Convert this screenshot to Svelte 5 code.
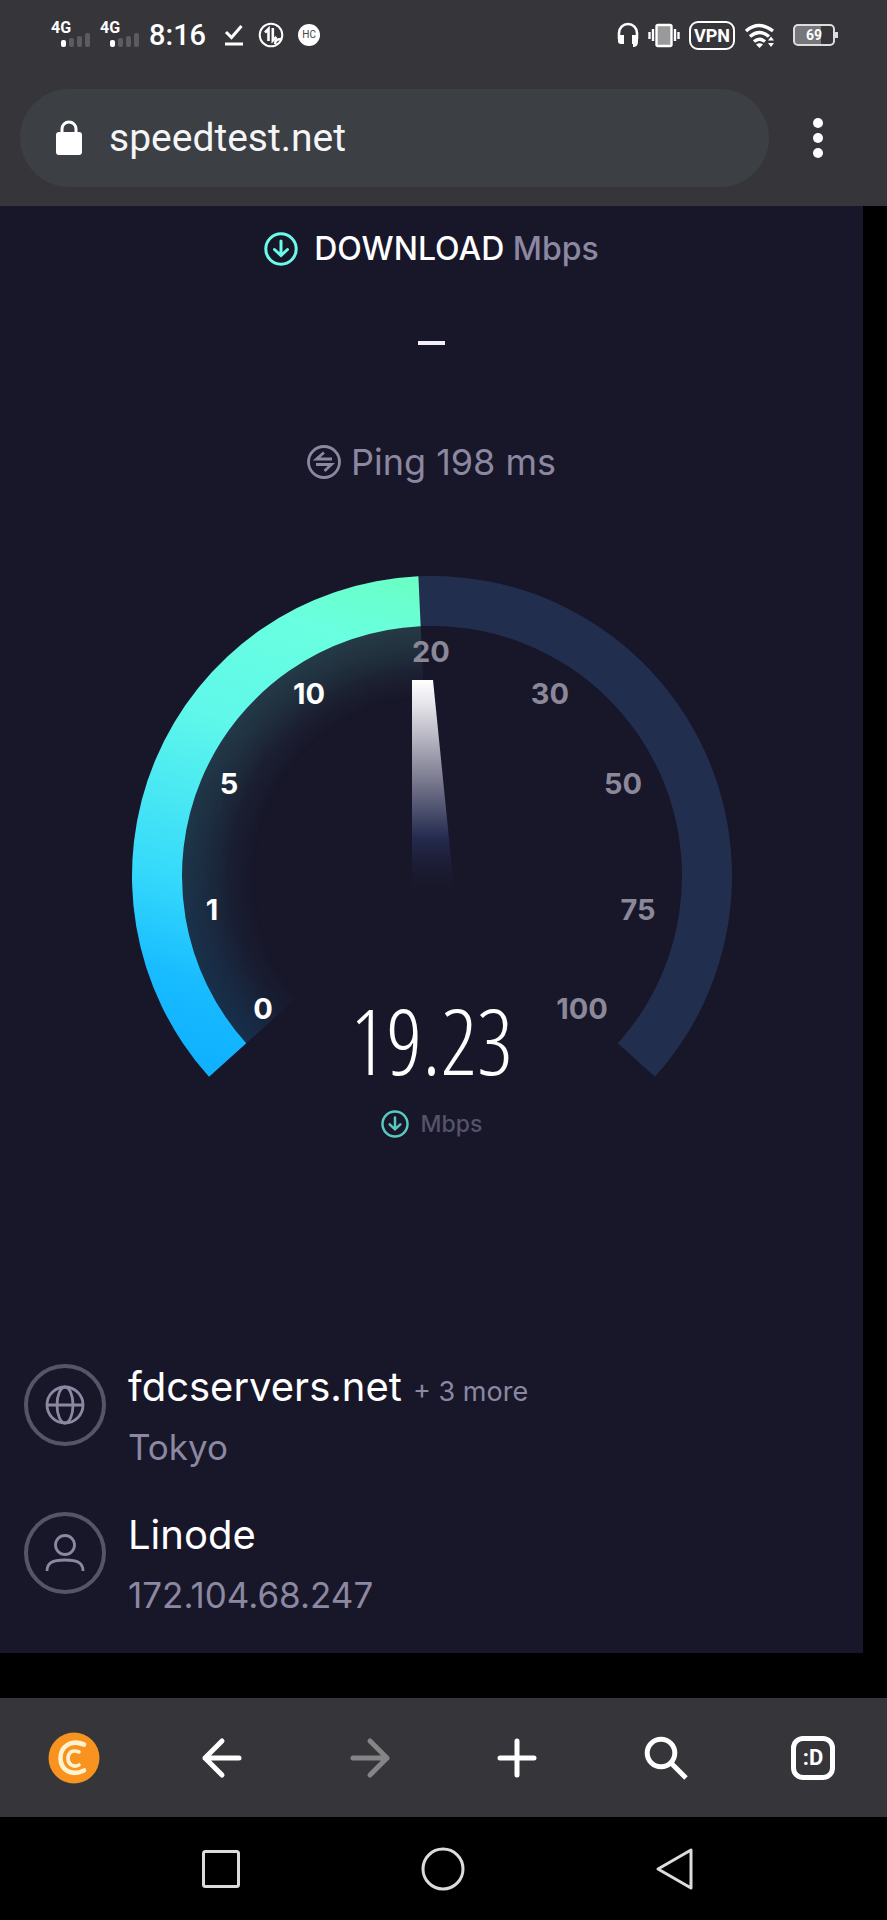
<script lang="ts">
	let url = $state('speedtest.net');

	const ping = 198;
	const speed = '19.23';

	// gauge scale, coordinates inside the 600 x 562 dial
	const ticks = [
		{ label: '0', x: 131, y: 433, passed: true },
		{ label: '1', x: 80, y: 334, passed: true },
		{ label: '5', x: 97, y: 208, passed: true },
		{ label: '10', x: 177, y: 118, passed: true },
		{ label: '20', x: 299, y: 76, passed: false },
		{ label: '30', x: 418, y: 118, passed: false },
		{ label: '50', x: 491, y: 208, passed: false },
		{ label: '75', x: 506, y: 334, passed: false },
		{ label: '100', x: 450, y: 433, passed: false }
	];

	const CENTER = 300;
	const START = -132;
	const END = 132;
	const PROGRESS = -2.6;

	// degrees are measured clockwise from twelve o'clock
	function point(r: number, deg: number) {
		const a = (deg * Math.PI) / 180;
		return `${(CENTER + r * Math.sin(a)).toFixed(2)} ${(CENTER - r * Math.cos(a)).toFixed(2)}`;
	}

	function band(inner: number, outer: number, from: number, to: number) {
		const large = to - from > 180 ? 1 : 0;
		return `M${point(outer, from)}A${outer} ${outer} 0 ${large} 1 ${point(outer, to)}L${point(inner, to)}A${inner} ${inner} 0 ${large} 0 ${point(inner, from)}Z`;
	}
</script>

{#snippet downArrow(size: number)}
	<svg class="down-icon" width={size} height={size} viewBox="0 0 34 34" aria-hidden="true">
		<circle cx="17" cy="17" r="15.2" />
		<path d="M17 9v14M10.5 17.5 17 23.5l6.500-6" />
	</svg>
{/snippet}

{#snippet signal()}
	<span class="signal">
		<span class="signal-type">4G</span>
		<svg width="30" height="14" viewBox="0 0 30 14" aria-hidden="true">
			<rect x="1" y="7" width="5" height="7" rx="2" fill="#fff" />
			<rect x="9" y="5" width="5" height="9" rx="2" fill="#5b5b60" />
			<rect x="17" y="3" width="5" height="11" rx="2" fill="#5b5b60" />
			<rect x="25" y="0" width="5" height="14" rx="2" fill="#5b5b60" />
		</svg>
	</span>
{/snippet}

<div class="screen">
	<header class="browser-top">
		<div class="status-bar">
			<div class="status-left">
				{@render signal()}
				{@render signal()}
				<span class="clock">8:16</span>
				<svg width="20" height="22" viewBox="0 0 20 22" aria-hidden="true">
					<path d="M2 8l5.500 5.500L17.500 2" fill="none" stroke="#fff" stroke-width="3" />
					<path d="M1 20h18" stroke="#fff" stroke-width="3" />
				</svg>
				<svg class="data-icon" width="26" height="26" viewBox="0 0 26 26" aria-hidden="true">
					<circle cx="13" cy="13" r="11.300" fill="none" stroke="#fff" stroke-width="2" />
					<path d="M7 10.500 10.500 7v12M14.800 6v12.500L18.500 15" fill="none" stroke="#fff" stroke-width="2.600" />
					<path d="M17 22c0-3 2-5 6-5" stroke="#fff" stroke-width="2.500" fill="none" />
				</svg>
				<span class="hc">HC</span>
			</div>
			<div class="status-right">
				<svg width="22" height="26" viewBox="0 0 22 26" aria-hidden="true">
					<path d="M2 17v-6a9 9 0 0 1 18 0v6" fill="none" stroke="#fff" stroke-width="2.600" />
					<path d="M1 13h6v9H4a3 3 0 0 1-3-3zM15 13h6v7q0 5-5 5v-3h-1z" fill="#fff" />
				</svg>
				<svg width="32" height="26" viewBox="0 0 32 26" aria-hidden="true">
					<rect x="8.500" y="3" width="15" height="21" rx="1.500" fill="#99999c" stroke="#fff" stroke-width="2.400" />
					<path d="M5 7v12M1.500 10v7M27 7v12M30.500 10v7" stroke="#fff" stroke-width="2.400" />
				</svg>
				<span class="vpn">VPN</span>
				<svg width="32" height="26" viewBox="0 0 32 26" aria-hidden="true">
					<g fill="none" stroke="#fff" stroke-width="3.400">
						<path d="M2 9q13-11 27 0" />
						<path d="M6 14.500q9.500-8 19 0" />
						<path d="M10 19.500q5.500-4.500 11 0" />
					</g>
					<path d="M12 22.500q3.500-2.500 7 0L15.500 26z" fill="#fff" />
					<path d="M27 14.500l3 4h-6zM27 25l3-4h-6z" fill="#fff" />
				</svg>
				<span class="battery">69</span>
			</div>
		</div>

		<div class="url-row">
			<label class="url-pill">
				<svg width="28" height="36" viewBox="0 0 28 36" aria-hidden="true">
					<path d="M7 13V9a7 7 0 0 1 14 0v4" fill="none" stroke="#fff" stroke-width="3" />
					<rect x="1" y="12" width="26" height="23" rx="3" fill="#fff" />
				</svg>
				<input type="text" bind:value={url} aria-label="Address" />
			</label>
			<button class="menu" aria-label="Menu">
				<svg width="12" height="42" viewBox="0 0 12 42" fill="#fff">
					<circle cx="6" cy="6" r="5" />
					<circle cx="6" cy="21" r="5" />
					<circle cx="6" cy="36" r="5" />
				</svg>
			</button>
		</div>
	</header>

	<main class="page">
		<section class="result">
			<h1 class="result-title">
				{@render downArrow(34)}
				<span>DOWNLOAD <span class="unit">Mbps</span></span>
			</h1>
			<div class="dash" role="img" aria-label="No result yet"></div>
			<p class="ping">
				<svg width="34" height="34" viewBox="0 0 34 34" aria-hidden="true">
					<circle cx="17" cy="17" r="15.500" />
					<path d="M17 7.500 9.500 14H25M9 19.500h15.500L17.500 26" />
				</svg>
				Ping {ping} ms
			</p>
		</section>

		<section class="gauge">
			<svg class="dial" viewBox="0 0 600 562" role="img" aria-label="Speed gauge">
				<defs>
					<linearGradient id="arc" gradientUnits="userSpaceOnUse" x1="120" y1="500" x2="270" y2="0">
						<stop offset="0" stop-color="#10b1ff" />
						<stop offset="0.140" stop-color="#18bcff" />
						<stop offset="0.320" stop-color="#35d9fb" />
						<stop offset="0.640" stop-color="#5ff8ea" />
						<stop offset="0.860" stop-color="#69ffe0" />
						<stop offset="1" stop-color="#6affc4" />
					</linearGradient>
					<radialGradient id="fade" gradientUnits="userSpaceOnUse" cx="300" cy="300" r="250">
						<stop offset="0.700" stop-color="#fff" stop-opacity="0" />
						<stop offset="0.800" stop-color="#fff" stop-opacity="0.040" />
						<stop offset="0.900" stop-color="#fff" stop-opacity="0.110" />
						<stop offset="1" stop-color="#fff" stop-opacity="0.160" />
					</radialGradient>
					<mask id="glow-mask" maskUnits="userSpaceOnUse" x="0" y="0" width="600" height="562">
						<rect width="600" height="562" fill="url(#fade)" />
					</mask>
					<linearGradient id="needle" x1="0" y1="0" x2="0" y2="1">
						<stop offset="0" stop-color="#fff" />
						<stop offset="0.120" stop-color="#e3e2e8" />
						<stop offset="0.400" stop-color="#8d8c9e" />
						<stop offset="0.720" stop-color="#252c50" />
						<stop offset="1" stop-color="#181629" stop-opacity="0" />
					</linearGradient>
				</defs>
				<path d={band(250, 300, START, END)} fill="#222e4e" />
				<path d={band(150, 250, START, PROGRESS)} fill="url(#arc)" mask="url(#glow-mask)" />
				<path d={band(250, 300, START, PROGRESS)} fill="url(#arc)" />
				<path d="M280 104h21l22 218h-43z" fill="url(#needle)" />
				{#each ticks as tick (tick.label)}
					<text class="tick" class:passed={tick.passed} x={tick.x} y={tick.y + 10}>{tick.label}</text>
				{/each}
			</svg>
			<div class="readout">
				<div class="speed">{speed}</div>
				<div class="readout-unit">
					{@render downArrow(28)}
					<span>Mbps</span>
				</div>
			</div>
		</section>

		<section class="servers" id="servers">
			<div class="server">
				<span class="server-icon">
					<svg width="40" height="40" viewBox="0 0 40 40" aria-hidden="true">
						<circle cx="20" cy="20" r="18" />
						<ellipse cx="20" cy="20" rx="8" ry="18" />
						<path d="M2 20h36" />
					</svg>
				</span>
				<div>
					<div class="server-name">fdcservers.net <a href="#servers" class="more">+ 3 more</a></div>
					<div class="server-detail">Tokyo</div>
				</div>
			</div>
			<div class="server">
				<span class="server-icon">
					<svg width="40" height="40" viewBox="0 0 40 40" aria-hidden="true">
						<circle cx="20" cy="12" r="9.500" />
						<path d="M2 38c0-8 5-11 18-11s18 3 18 11" />
					</svg>
				</span>
				<div>
					<div class="server-name">Linode</div>
					<div class="server-detail">172.104.68.247</div>
				</div>
			</div>
		</section>
	</main>

	<nav class="toolbar" aria-label="Browser">
		<button aria-label="CryptoTab">
			<svg width="52" height="52" viewBox="0 0 52 52">
				<circle cx="26" cy="26" r="25.500" fill="#f7931e" />
				<g fill="none" stroke="#fff3cf" stroke-linecap="round">
					<path d="M36 12.500C22 7 12.500 15 12.500 26S22 45 36 38.500" stroke-width="4.600" />
					<path d="M31 20c-7-3-11 1-11 6.500S25 36 31 33" stroke-width="3.600" />
				</g>
			</svg>
		</button>
		<button aria-label="Back">
			<svg class="line" width="42" height="42" viewBox="0 0 42 42">
				<path d="M21 4 4 21l17 17M4 21h34" />
			</svg>
		</button>
		<button aria-label="Forward" disabled>
			<svg class="line" width="42" height="42" viewBox="0 0 42 42">
				<path d="M21 4l17 17-17 17M38 21H4" />
			</svg>
		</button>
		<button aria-label="New tab">
			<svg class="line" width="42" height="42" viewBox="0 0 42 42">
				<path d="M21 4v34M4 21h34" />
			</svg>
		</button>
		<button aria-label="Search">
			<svg width="46" height="46" viewBox="0 0 46 46" fill="none" stroke="#fff" stroke-width="5">
				<circle cx="19" cy="18" r="13.800" />
				<path d="M30 29l14 14" />
			</svg>
		</button>
		<button aria-label="Tabs"><span class="tabs">:D</span></button>
	</nav>

	<nav class="system-nav" aria-label="System">
		<button aria-label="Recent apps">
			<svg width="44" height="44" viewBox="0 0 44 44"><rect x="4.500" y="4.500" width="35" height="35" rx="2" /></svg>
		</button>
		<button aria-label="Home">
			<svg width="44" height="44" viewBox="0 0 44 44"><circle cx="22" cy="22" r="20" /></svg>
		</button>
		<button aria-label="Back">
			<svg width="60" height="44" viewBox="0 0 60 44"><path d="M55 3v38L22 22z" /></svg>
		</button>
	</nav>
</div>

<style>
	:global(body) {
		margin: 0;
		background: #000;
	}
	.screen {
		font-family: Inter, 'Open Sans', sans-serif;
		color: #fff;
		background: #000;
	}
	button {
		padding: 0;
		border: none;
		background: none;
		color: inherit;
	}
	svg {
		flex: none;
		display: block;
	}

	/* STATUS BAR */
	.browser-top {
		background: #36353a;
		padding-bottom: 19px;
		font-family: Roboto, sans-serif;
	}
	.status-bar {
		display: flex;
		justify-content: space-between;
		align-items: center;
		height: 70px;
		padding: 0 52px 0 51px;
	}
	.status-left,
	.status-right {
		display: flex;
		align-items: center;
	}
	.status-left { gap: 10px; }
	.status-right { gap: 9px; }
	.signal {
		display: flex;
		flex-direction: column;
		align-items: flex-end;
		width: 39px;
	}
	.signal-type {
		align-self: flex-start;
		font-size: 16px;
		line-height: 10px;
		font-weight: 700;
	}
	.clock {
		font-size: 29px;
		font-weight: 500;
		margin-right: 8px;
	}
	.data-icon { margin-left: 4px; }
	.hc {
		width: 22px;
		margin-left: 4px;
		border-radius: 50%;
		background: #fff;
		color: #444;
		font-size: 10px;
		line-height: 22px;
		text-align: center;
	}
	.vpn {
		border: 2px solid #fff;
		border-radius: 9px;
		padding: 0 3px;
		font-size: 18px;
		line-height: 25px;
		font-weight: 700;
	}
	.battery {
		position: relative;
		width: 38px;
		margin-left: 8px;
		border: 2px solid #ddd;
		border-radius: 5px;
		background: linear-gradient(90deg, #77777b 69%, transparent 69%);
		font-size: 14px;
		line-height: 18px;
		font-weight: 700;
		text-align: center;
	}
	.battery::after {
		content: '';
		position: absolute;
		right: -5px;
		top: 6px;
		width: 3px;
		height: 6px;
		background: #ddd;
	}

	/* ADDRESS BAR */
	.url-row {
		display: flex;
		align-items: center;
		margin-top: 19px;
		padding-left: 20px;
	}
	.url-pill {
		flex: 1;
		display: flex;
		align-items: center;
		gap: 26px;
		height: 98px;
		padding: 0 55px 0 35px;
		box-sizing: border-box;
		border-radius: 49px;
		background: #3c3f43;
	}
	.url-pill input {
		flex: 1;
		min-width: 0;
		padding: 0;
		border: none;
		outline: none;
		background: none;
		color: #f5f5f7;
		font-family: inherit;
		font-size: 39px;
	}
	.menu {
		display: flex;
		justify-content: center;
		width: 98px;
		margin-right: 20px;
	}

	/* PAGE */
	.page {
		margin-right: 24px;
		padding: 23px 0 28px;
		background: #181629;
	}
	.result {
		display: flex;
		flex-direction: column;
		align-items: center;
	}
	.result-title {
		display: flex;
		align-items: center;
		gap: 16px;
		margin: 0;
		font-size: 32px;
		line-height: 40px;
		font-weight: 500;
	}
	.unit { color: #8c88a2; }
	.down-icon {
		fill: none;
		stroke: #6bfbe8;
		stroke-width: 3;
		stroke-linecap: round;
	}
	.dash {
		width: 27px;
		height: 4px;
		margin: 72px 0 97px;
		background: #f3eef8;
	}
	.ping {
		display: flex;
		align-items: center;
		gap: 10px;
		margin: 0;
		color: #8c88a2;
		font-size: 36px;
		line-height: 40px;
	}
	.ping svg {
		fill: none;
		stroke: #8c88a2;
		stroke-width: 2.8;
	}

	/* GAUGE */
	.gauge {
		display: grid;
		max-width: 600px;
		margin: 94px auto 0;
	}
	.dial,
	.readout {
		grid-area: 1 / 1;
	}
	.tick {
		fill: #8b889a;
		font-size: 29px;
		font-weight: 700;
		text-anchor: middle;
	}
	.tick.passed { fill: #fff; }
	.readout {
		align-self: end;
		display: flex;
		flex-direction: column;
		align-items: center;
	}
	.speed {
		font-family: 'Open Sans Condensed Light', 'Open Sans Condensed', 'Roboto Condensed', Roboto, sans-serif;
		font-size: 90px;
		line-height: 100px;
		font-weight: 100;
	}
	.readout-unit {
		display: flex;
		align-items: center;
		gap: 12px;
		margin-top: 20px;
		color: #55526a;
		font-size: 23px;
		line-height: 28px;
		font-weight: 500;
	}
	.readout-unit :global(.down-icon) { stroke: #58c9c0; }

	/* SERVERS */
	.servers {
		display: flex;
		flex-direction: column;
		gap: 28px;
		margin-top: 219px;
		padding: 0 24px;
	}
	.server {
		display: flex;
		align-items: flex-start;
		gap: 22px;
	}
	.server-icon {
		display: flex;
		justify-content: center;
		align-items: center;
		width: 74px;
		height: 74px;
		margin-top: 7px;
		border: 4px solid #575469;
		border-radius: 50%;
	}
	.server-icon svg {
		fill: none;
		stroke: #8c88a2;
		stroke-width: 2.8;
	}
	.server-name {
		font-size: 40px;
		line-height: 60px;
	}
	.more {
		color: #8c88a2;
		font-size: 27px;
		line-height: 30px;
		text-decoration: none;
	}
	.server-detail {
		color: #8c88a2;
		font-size: 35px;
		line-height: 60px;
	}

	/* TOOLBARS */
	.toolbar {
		display: grid;
		grid-template-columns: repeat(6, 1fr);
		height: 119px;
		margin-top: 45px;
		background: #36353a;
	}
	.toolbar button,
	.system-nav button {
		display: flex;
		justify-content: center;
		align-items: center;
	}
	.line {
		fill: none;
		stroke: #fff;
		stroke-width: 5;
		stroke-linecap: round;
		stroke-linejoin: round;
	}
	button:disabled .line { stroke: #858587; }
	.tabs {
		width: 34px;
		border: 5px solid #fff;
		border-radius: 12px;
		font-family: Roboto, sans-serif;
		font-size: 22px;
		line-height: 34px;
		font-weight: 700;
	}
	.system-nav {
		display: grid;
		grid-template-columns: repeat(3, 1fr);
		height: 103px;
		padding: 0 110px;
	}
	.system-nav svg {
		fill: none;
		stroke: #dcdcdc;
		stroke-width: 3;
		stroke-linejoin: round;
	}
</style>
